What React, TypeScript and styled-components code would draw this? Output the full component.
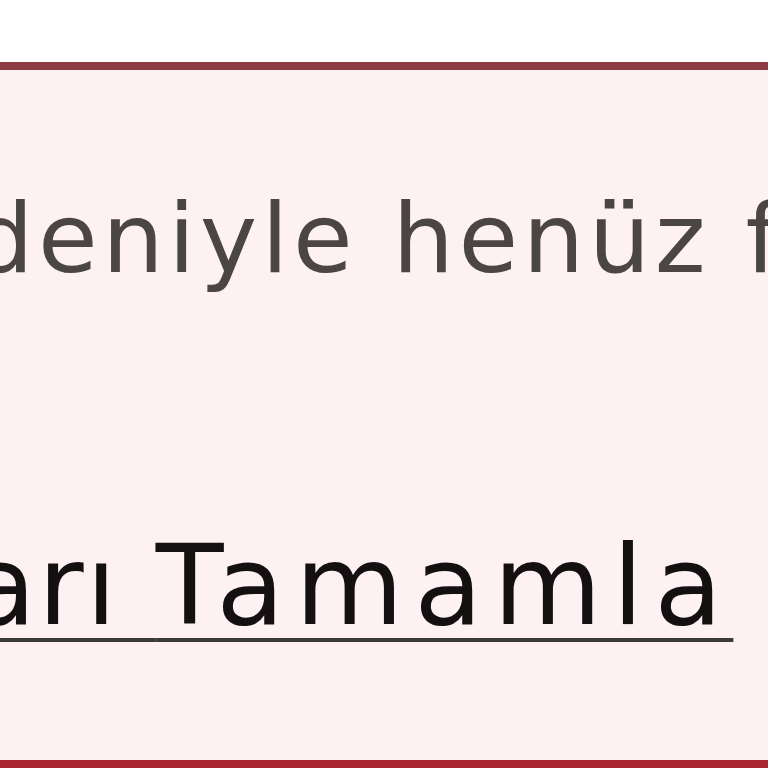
import React from "react";
import styled, { createGlobalStyle } from "styled-components";

const Global = createGlobalStyle`
  html, body { margin: 0; padding: 0; background: #ffffff; overflow: hidden; }
  body { width: 768px; height: 768px; }
`;

const Panel = styled.section`
  margin-top: 62px;
  margin-left: -20px;
  width: 860px;
  height: 690px;
  background: #fdf1f1;
  border-top: 8px solid #8e3a44;
  border-bottom: 8px solid #a8262e;
  display: flex;
  flex-direction: column;
  overflow: hidden;
`;

const Message = styled.p`
  margin: 0 0 0 -8px;
  padding-top: 120px;
  font-family: "DejaVu Sans", "Noto Sans", sans-serif;
  font-size: 97px;
  letter-spacing: 4.5px;
  line-height: 1;
  color: #4b4546;
  white-space: nowrap;
`;

const ActionLink = styled.a`
  margin: 243px 0 0 -12px;
  font-family: "DejaVu Sans", "Noto Sans", sans-serif;
  font-size: 111px;
  letter-spacing: 11px;
  line-height: 1;
  color: #141012;
  white-space: nowrap;
  text-decoration: underline;
  text-decoration-color: #3a3a3a;
  text-decoration-thickness: 4px;
  text-underline-offset: 14px;
  align-self: flex-start;
`;

const Lead = styled.span`
  letter-spacing: 2px;
`;

export default function App() {
  return (
    <>
      <Global />
      <Panel>
        <Message>deniyle henüz f</Message>
        <ActionLink href="#">
          <Lead>arı </Lead>Tamamla
        </ActionLink>
      </Panel>
    </>
  );
}
